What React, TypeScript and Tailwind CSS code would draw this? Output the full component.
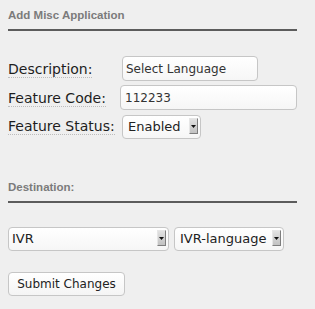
import React from 'react';

const Arrow: React.FC = () => (
  <span className="pointer-events-none absolute right-[3px] top-1/2 -translate-y-1/2 flex h-[16px] w-[9px] items-center justify-center border-r border-b border-[#7e7e7e] border-l border-t border-l-[#e6e6e6] border-t-[#e6e6e6] bg-gradient-to-b from-[#e2e2e2] to-[#c2c2c2]">
    <svg width="5" height="3" viewBox="0 0 5 3">
      <path d="M0 0 L5 0 L2.5 3 Z" fill="#111" />
    </svg>
  </span>
);

interface SelectProps {
  value: string;
  width: string;
  pad: string;
}

const FakeSelect: React.FC<SelectProps> = ({ value, width, pad }) => (
  <div className={`relative h-[24px] ${width}`}>
    <select
      defaultValue={value}
      className={`h-full w-full appearance-none rounded-[4px] border border-[#c6c6c6] bg-gradient-to-b from-white to-[#f6f6f6] ${pad} text-[13px] text-[#222] outline-none font-['DejaVu_Sans',sans-serif]`}
    >
      <option>{value}</option>
    </select>
    <Arrow />
  </div>
);

const Label: React.FC<{ text: string; width: string }> = ({ text, width }) => (
  <div className={`${width} shrink-0`}>
    <span className="border-b border-dotted border-[#bdbdbd] text-[14px] leading-[17px] text-[#1e1e1e]">{text}</span>
  </div>
);

const SectionHeader: React.FC<{ title: string }> = ({ title }) => (
  <div>
    <h3 className="font-['Liberation_Sans',Arial,sans-serif] text-[11.5px] font-bold leading-[14px] text-[#7b7b7b]">{title}</h3>
    <div className="mt-[7px] h-[2px] w-[289px] bg-[#5c5c5c]" />
  </div>
);

export default function App() {
  return (
    <div className="min-h-screen bg-[#efefef] px-2 pt-[8px] font-['DejaVu_Sans',sans-serif]">
      <SectionHeader title="Add Misc Application" />

      <div className="mt-[25px] flex flex-col gap-[4px]">
        <div className="flex items-center">
          <Label text="Description:" width="w-[114px]" />
          <input
            defaultValue="Select Language"
            className="h-[25px] w-[136px] rounded-[4px] border border-[#c6c6c6] bg-gradient-to-b from-white to-[#f6f6f6] pl-[3px] text-[12px] text-[#333] outline-none"
          />
        </div>
        <div className="flex items-center">
          <Label text="Feature Code:" width="w-[112px]" />
          <input
            defaultValue="112233"
            className="h-[25px] w-[177px] rounded-[4px] border border-[#c6c6c6] bg-gradient-to-b from-white to-[#f6f6f6] pl-[4px] text-[12px] text-[#333] outline-none"
          />
        </div>
        <div className="flex items-center">
          <Label text="Feature Status:" width="w-[114px]" />
          <FakeSelect value="Enabled" width="w-[79px]" pad="pl-[5px]" />
        </div>
      </div>

      <div className="mt-[42px]">
        <SectionHeader title="Destination:" />
      </div>

      <div className="mt-[23px] flex gap-[5px]">
        <FakeSelect value="IVR" width="w-[161px]" pad="pl-[3px]" />
        <FakeSelect value="IVR-language" width="w-[110px]" pad="pl-[5px]" />
      </div>

      <button className="mt-[22px] h-[24px] w-[117px] rounded-[4px] border border-[#c6c6c6] bg-gradient-to-b from-white to-[#f4f4f4] text-[12px] text-[#222]">
        Submit Changes
      </button>
    </div>
  );
}
